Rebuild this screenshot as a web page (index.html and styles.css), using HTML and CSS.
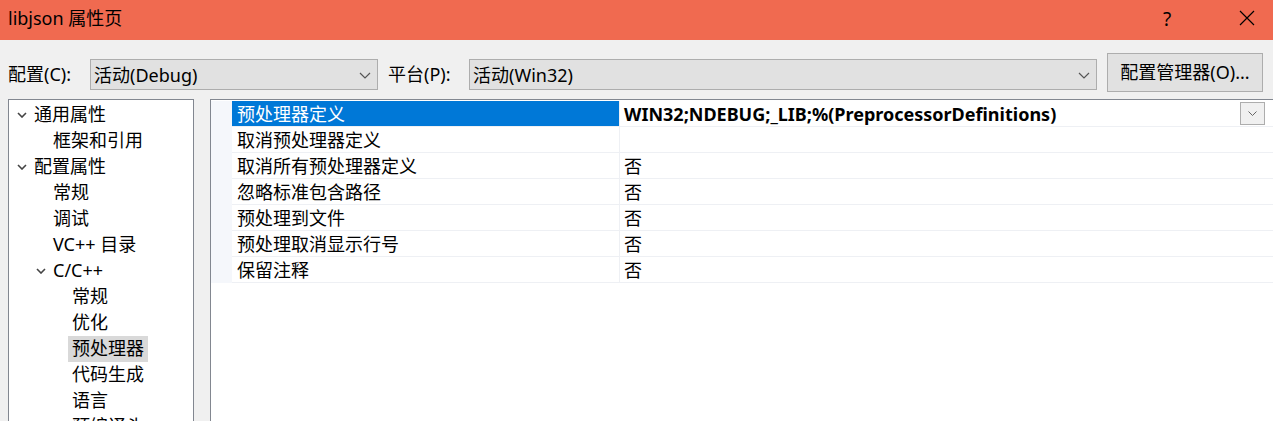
FILE: index.html
```html
<!DOCTYPE html>
<html lang="zh-CN">
<head>
    <meta charset="UTF-8">
    <title>libjson 属性页</title>
    <link rel="stylesheet" href="styles.css">
</head>
<body>
    <div class="titlebar">
        <span class="title">libjson 属性页</span>
        <span class="help">?</span>
        <svg class="close" width="16" height="16" viewBox="0 0 16 16"><path d="M1 1L15 15M15 1L1 15" stroke="#000" stroke-width="1.2" fill="none"/></svg>
    </div>

    <div class="toolbar">
        <label class="tb-label">配置(C):</label>
        <div class="combo combo-config">
            <span>活动(Debug)</span>
            <svg class="chev" width="12" height="7" viewBox="0 0 12 7"><path d="M1 1L6 6L11 1" stroke="#555" stroke-width="1.2" fill="none"/></svg>
        </div>
        <label class="tb-label tb-platform">平台(P):</label>
        <div class="combo combo-platform">
            <span>活动(Win32)</span>
            <svg class="chev" width="12" height="7" viewBox="0 0 12 7"><path d="M1 1L6 6L11 1" stroke="#555" stroke-width="1.2" fill="none"/></svg>
        </div>
        <button class="btn">配置管理器(O)...</button>
    </div>

    <div class="panes">
        <ul class="tree">
            <li class="lvl0"><svg class="tw" width="10" height="6" viewBox="0 0 10 6"><path d="M1 1L5 5L9 1" stroke="#444" stroke-width="1.6" fill="none"/></svg>通用属性</li>
            <li class="lvl1">框架和引用</li>
            <li class="lvl0"><svg class="tw" width="10" height="6" viewBox="0 0 10 6"><path d="M1 1L5 5L9 1" stroke="#444" stroke-width="1.6" fill="none"/></svg>配置属性</li>
            <li class="lvl1">常规</li>
            <li class="lvl1">调试</li>
            <li class="lvl1">VC++ 目录</li>
            <li class="lvl1 open"><svg class="tw" width="10" height="6" viewBox="0 0 10 6"><path d="M1 1L5 5L9 1" stroke="#444" stroke-width="1.6" fill="none"/></svg>C/C++</li>
            <li class="lvl2">常规</li>
            <li class="lvl2">优化</li>
            <li class="lvl2"><span class="sel">预处理器</span></li>
            <li class="lvl2">代码生成</li>
            <li class="lvl2">语言</li>
            <li class="lvl2">预编译头</li>
        </ul>

        <div class="grid">
            <div class="row selected">
                <div class="gutter"></div>
                <div class="name">预处理器定义</div>
                <div class="value bold">WIN32;NDEBUG;_LIB;%(PreprocessorDefinitions)
                    <span class="drop"><svg width="9" height="5" viewBox="0 0 9 5"><path d="M0.5 0.5L4.5 4.5L8.5 0.5" stroke="#666" stroke-width="1" fill="none"/></svg></span>
                </div>
            </div>
            <div class="row">
                <div class="gutter"></div>
                <div class="name">取消预处理器定义</div>
                <div class="value"></div>
            </div>
            <div class="row">
                <div class="gutter"></div>
                <div class="name">取消所有预处理器定义</div>
                <div class="value">否</div>
            </div>
            <div class="row">
                <div class="gutter"></div>
                <div class="name">忽略标准包含路径</div>
                <div class="value">否</div>
            </div>
            <div class="row">
                <div class="gutter"></div>
                <div class="name">预处理到文件</div>
                <div class="value">否</div>
            </div>
            <div class="row">
                <div class="gutter"></div>
                <div class="name">预处理取消显示行号</div>
                <div class="value">否</div>
            </div>
            <div class="row">
                <div class="gutter"></div>
                <div class="name">保留注释</div>
                <div class="value">否</div>
            </div>
        </div>
    </div>
</body>
</html>
```

FILE: styles.css
```css
:root {
    --title-bg: #f06a50;
    --face: #f0f0f0;
    --ctl-bg: #e1e1e1;
    --ctl-border: #adadad;
    --pane-border: #828790;
    --select-blue: #0078d7;
    --grid-line: #eef0f4;
    --gutter: #f5f7fb;
    --font: "Noto Sans", "Noto Sans CJK SC", sans-serif;
}
html, body {
    margin: 0;
    height: 100%;
    overflow: hidden;
}
body {
    font-family: var(--font);
    font-size: 18px;
    color: #000;
    background: var(--face);
}
.titlebar {
    height: 40px;
    background: var(--title-bg);
    display: flex;
    align-items: center;
    padding-left: 8px;
}
.title {
    flex: 1;
    line-height: 40px;
    margin-top: -4px;
}
.help {
    width: 16px;
    margin-right: 60px;
    margin-top: -3px;
    font-size: 19px;
}
.close {
    margin-right: 18px;
    margin-top: -4px;
}
.toolbar {
    height: 46px;
    padding: 13px 0 0 8px;
    display: flex;
    align-items: flex-start;
}
.tb-label {
    width: 82px;
    line-height: 30px;
    margin-top: 6px;
}
.tb-platform {
    width: 81px;
    margin-left: 10px;
}
.combo {
    box-sizing: border-box;
    height: 31px;
    margin-top: 6px;
    background: var(--ctl-bg);
    border: 1px solid var(--ctl-border);
    display: flex;
    align-items: center;
    padding: 0 0 2px 3px;
}
.combo span {
    flex: 1;
}
.combo .chev {
    margin-right: 6px;
    margin-top: 3px;
}
.combo-config { width: 288px; }
.combo-platform { width: 628px; }
.btn {
    box-sizing: border-box;
    width: 156px;
    height: 39px;
    margin-left: 10px;
    background: var(--ctl-bg);
    border: 1px solid var(--ctl-border);
    font-family: var(--font);
    font-size: 18px;
    color: #000;
    padding: 0 0 3px;
}
.panes {
    display: flex;
    height: 400px;
}
.tree {
    list-style: none;
    margin: 0 0 0 8px;
    padding: 2px 0 0;
    width: 184px;
    background: #fff;
    border: 1px solid var(--pane-border);
}
.tree li {
    height: 26px;
    line-height: 24px;
    white-space: nowrap;
    position: relative;
}
.tree .lvl0 { padding-left: 25px; }
.tree .lvl1 { padding-left: 44px; }
.tree .lvl2 { padding-left: 63px; }
.tree .tw {
    position: absolute;
    top: 10px;
}
.tree .lvl0 .tw { left: 8px; }
.tree .lvl1 .tw { left: 27px; }
.tree .sel {
    background: #d9d9d9;
    display: inline-block;
    padding: 0 4px;
    margin-left: -4px;
    height: 26px;
    line-height: 24px;
}
.grid {
    flex: 1;
    margin-left: 16px;
    background: #fff;
    border-left: 1px solid var(--pane-border);
    border-top: 1px solid var(--pane-border);
    padding-top: 1px;
}
.row {
    display: flex;
    height: 26px;
}
.gutter {
    width: 21px;
    background: var(--gutter);
}
.name, .value {
    box-sizing: border-box;
    height: 26px;
    line-height: 26px;
    border-bottom: 1px solid var(--grid-line);
    white-space: nowrap;
}
.name {
    width: 387px;
    padding-left: 5px;
}
.value {
    flex: 1;
    padding-left: 4px;
    border-left: 1px solid var(--grid-line);
    position: relative;
}
.selected .name {
    background: var(--select-blue);
    color: #fff;
}
.bold { font-weight: bold; }
.drop {
    position: absolute;
    left: 620px;
    top: 1px;
    width: 23px;
    height: 21px;
    background: #f0f0f0;
    border: 1px solid var(--ctl-border);
    display: flex;
    align-items: center;
    justify-content: center;
}
```
